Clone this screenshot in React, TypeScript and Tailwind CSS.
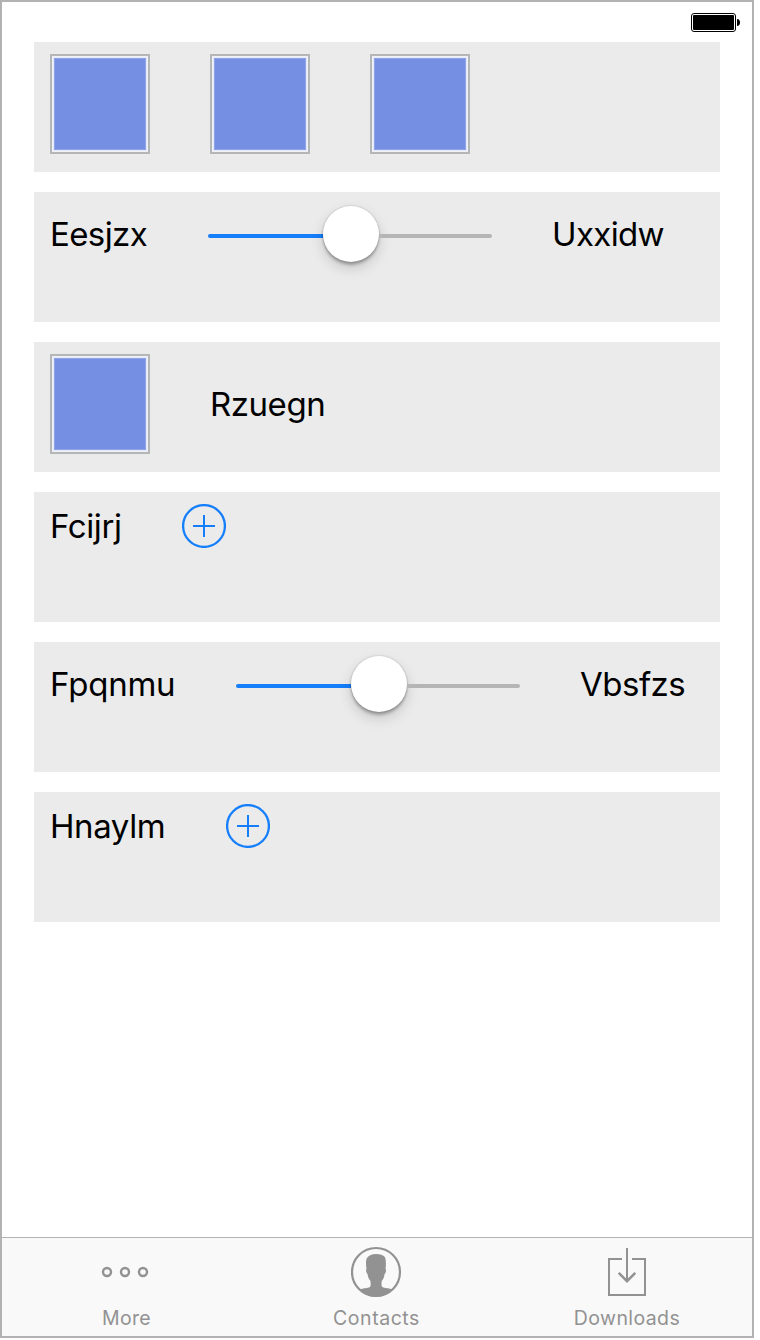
import type { ReactNode } from "react";

function Card({ children, className = "" }: { children: ReactNode; className?: string }) {
  return <section className={`flex h-[130px] items-start gap-[60px] bg-[#ebebeb] px-4 pt-3 ${className}`}>{children}</section>;
}

function Label({ text, className }: { text: string; className: string }) {
  return <span className={`shrink-0 whitespace-nowrap text-[33px] leading-10 text-black ${className}`}>{text}</span>;
}

function Swatch() {
  return (
    <div className="size-[100px] shrink-0 border-2 border-[#b5b7b6] bg-[#eef1f6] p-px">
      <div className="size-full border border-[#e6ebfb] bg-[#8fa4e8] p-px"><div className="size-full bg-[#758fe2]" /></div>
    </div>
  );
}

function Slider() {
  return (
    <div className="mt-px flex h-[58px] w-[284px] shrink-0 items-center">
      <div className="mt-1 h-1 w-[115px] rounded-l-full bg-[#157efb]" />
      <div className="size-14 shrink-0 rounded-full bg-white shadow-[0_0_1px_1px_rgba(0,0,0,0.08),0_3px_3px_rgba(0,0,0,0.25),0_6px_14px_rgba(0,0,0,0.16)]" />
      <div className="mt-1 h-1 w-[113px] rounded-r-full bg-[#b5b5b5]" />
    </div>
  );
}

function AddButton() {
  return (
    <button aria-label="Add" className="size-11 shrink-0">
      <svg width="44" height="44" viewBox="0 0 44 44" fill="none" stroke="#157efb" strokeWidth="2">
        <circle cx="22" cy="22" r="20.9" strokeWidth="2.3" />
        <path d="M22 11v22M11 22h22" />
      </svg>
    </button>
  );
}

function Tab({ text, className, children }: { text: string; className: string; children: ReactNode }) {
  return (
    <button className="flex w-[250px] flex-col items-center pt-2 text-[#929292]">
      <svg width="52" height="52" viewBox="0 0 52 52" fill="none" stroke="#929292" strokeWidth="2">{children}</svg>
      <span className={`mt-2 whitespace-nowrap text-[19.5px] leading-6 ${className}`}>{text}</span>
    </button>
  );
}

export default function App() {
  return (
    <div className="h-[1340px] w-[760px] overflow-hidden bg-white font-['Inter',sans-serif]">
      <main className="flex h-[1338px] w-[754px] flex-col border-2 border-[#b2b2b2] bg-white">
        <header className="flex h-10 shrink-0 items-start justify-end pt-[11px] pr-3">
          <svg width="50" height="19" viewBox="0 0 50 19">
            <rect x="1.5" y=".5" width="44" height="18" rx="2.5" fill="white" stroke="black" />
            <rect x="3" y="2" width="41" height="15" rx="1" fill="black" />
            <path d="M47 6c2 0 3 1.5 3 3.5S49 13 47 13Z" fill="black" />
          </svg>
        </header>
        <div className="flex flex-col gap-5 px-8">
          <Card><Swatch /><Swatch /><Swatch /></Card>
          <Card>
            <Label text="Eesjzx" className="mt-2.5 w-[98px] tracking-[-0.6px]" />
            <Slider />
            <Label text="Uxxidw" className="mt-2.5 tracking-[-0.65px]" />
          </Card>
          <Card><Swatch /><Label text="Rzuegn" className="mt-[30px] tracking-[-0.45px]" /></Card>
          <Card><Label text="Fcijrj" className="mt-0.5 w-[72px] tracking-[-0.4px]" /><AddButton /></Card>
          <Card>
            <Label text="Fpqnmu" className="mt-2.5 w-[126px] tracking-[-0.25px]" />
            <Slider />
            <Label text="Vbsfzs" className="mt-2.5 tracking-[-0.5px]" />
          </Card>
          <Card><Label text="Hnaylm" className="mt-0.5 w-[116px] tracking-[-0.4px]" /><AddButton /></Card>
        </div>
        <nav className="mt-auto flex h-[99px] shrink-0 border-t border-[#b2b2b2] bg-[#f9f9f9]">
          <Tab text="More" className="-ml-px tracking-[0.3px]">
            <g strokeWidth="2.4"><circle cx="6" cy="26" r="4" /><circle cx="24" cy="26" r="4" /><circle cx="42" cy="26" r="4" /></g>
          </Tab>
          <Tab text="Contacts" className="-ml-px tracking-[0.55px]">
            <circle cx="25" cy="26" r="24" strokeWidth="2.2" />
            <path stroke="none" fill="#929292" d="M9 43.5C12 42 17 42.2 18.8 41 20 40 19.8 37 19.4 35 17.8 33.2 17 31.3 16.5 28 15 27 14.8 24 15.5 22.5 14.8 19 14.8 14.5 15.8 12.3 18 9.3 21 8 25 8 29 8 32.2 9 33.8 11 35.2 13.5 35 19 34.6 22.5 35.4 24 35 27 33.6 28 33.2 31 32.4 33.3 30.8 35 30.4 37 30.2 40 31.4 41 33.5 42.2 38.5 42 41 43.5 33 53 17 53 9 43.5Z" />
          </Tab>
          <Tab text="Downloads" className="tracking-[0.4px]">
            <path d="M21 13H8v36h36V13H31M26 2v33" />
            <path strokeWidth="2.6" d="M17.7 26.9l8.3 8.2 8.3-8.2" />
          </Tab>
        </nav>
      </main>
    </div>
  );
}
